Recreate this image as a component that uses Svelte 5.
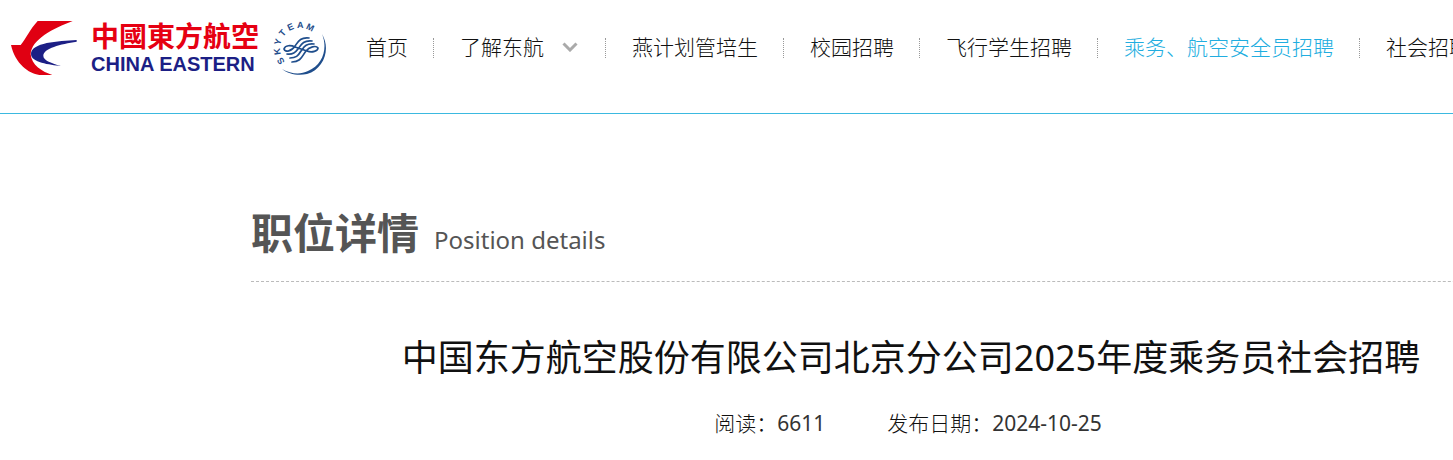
<script>
  const navItems = [
    { label: '首页', href: '#home' },
    { label: '了解东航', href: '#about', hasMenu: true },
    { label: '燕计划管培生', href: '#trainee' },
    { label: '校园招聘', href: '#campus' },
    { label: '飞行学生招聘', href: '#pilot' },
    { label: '乘务、航空安全员招聘', href: '#cabin' },
    { label: '社会招聘', href: '#social' }
  ];
  const current = '#cabin';

  // Letters sit on the left half of the ring
  const ringLetters = 'SKYTEAM'.split('').map((letter, i) => ({
    letter,
    angle: -124 + i * 25
  }));
</script>

<div class="page">
  <header class="header">
    <a class="logo" href="#home" aria-label="中國東方航空 CHINA EASTERN">
      <svg class="bird" viewBox="33 33 198 162" aria-hidden="true">
        <path fill="#e00012" d="M113 33H218C160 55 94 88 92 133C94 165 127 186 157 195H118C86 190 46 162 33 105H62C78 86 90 58 113 33Z" />
        <path fill="#1c1f85" d="M230 90C174 93 93 98 93 132C93 158 149 164 183 168C151 158 130 151 130 137C130 115 182 102 230 95Z" />
      </svg>
      <span class="wordmark">
        <span class="name-cn">中國東方航空</span>
        <span class="name-en">CHINA EASTERN</span>
      </span>
      <svg class="skyteam" viewBox="0 0 54 54" aria-hidden="true">
        {#each ringLetters as { letter, angle }}
          <text x="27" y="7" text-anchor="middle" transform="rotate({angle} 27 27)">{letter}</text>
        {/each}
        <path fill="#1f4e8c" d="M49 13C58 28 51 48 34 53C25 55 15 53 9 48C18 53 27 54 35 50C50 44 55 27 49 13Z" />
        <g fill="none" stroke="#1f4e8c" stroke-width="1.7" stroke-linecap="round">
          <path d="M36 17C27 16 25 21 22 25C19 30 12 32 11 28C12 24 18 24 22 26L34 30C39 32 45 30 45 27C43 24 36 26 33 30C29 35 28 41 19 41" />
          <path d="M39 20C30 19 28 24 25 28C22 32 19 34 14 33" />
          <path d="M41 23C33 22 31 26 28 30C25 35 23 37 17 37" />
        </g>
      </svg>
    </a>
    <nav>
      <ul class="nav">
        {#each navItems as item}
          <li>
            <a href={item.href} class:active={item.href === current}>{item.label}</a>
            {#if item.hasMenu}
              <svg class="chevron" viewBox="0 0 16 10" aria-hidden="true">
                <path d="M1.5 1.5L8 8L14.5 1.5" />
              </svg>
            {/if}
          </li>
        {/each}
      </ul>
    </nav>
  </header>

  <main class="content">
    <div class="section-head">
      <h2>职位详情</h2>
      <span>Position details</span>
    </div>
    <article>
      <h1>中国东方航空股份有限公司北京分公司2025年度乘务员社会招聘</h1>
      <p class="meta">
        <span>阅读：<span class="value">6611</span></span>
        <span>发布日期：<time class="value">2024-10-25</time></span>
      </p>
    </article>
  </main>
</div>

<style>
  :global(body) {
    margin: 0;
    background: #fff;
  }

  .page {
    overflow: hidden;
    color: #333;
    font-family: 'Noto Sans', 'Noto Sans CJK SC', sans-serif;
  }

  a {
    color: inherit;
    text-decoration: none;
  }

  .header {
    display: flex;
    align-items: center;
    padding: 21px 0 38px 11px;
    border-bottom: 1px solid #3bb9e0;
  }

  .logo {
    display: flex;
    flex-shrink: 0;
    align-items: center;
    height: 54px;
  }

  .bird {
    width: 66px;
    height: 54px;
    margin-right: 14px;
  }

  .wordmark {
    display: flex;
    flex-direction: column;
    gap: 5px;
    width: 168px;
    font-weight: 700;
    white-space: nowrap;
  }

  .name-cn {
    color: #e60012;
    font-family: 'Noto Sans CJK TC', sans-serif;
    font-size: 28px;
    line-height: 28px;
  }

  .name-en {
    color: #1c1f85;
    font-family: 'Liberation Sans', sans-serif;
    font-size: 20px;
    line-height: 21px;
  }

  .skyteam {
    width: 54px;
    height: 54px;
    margin-left: 14px;
  }

  .skyteam text {
    fill: #1f4e8c;
    font-family: 'Liberation Sans', sans-serif;
    font-size: 9px;
    font-weight: 700;
  }

  .nav {
    display: flex;
    margin: 0;
    padding: 0 0 0 13px;
    list-style: none;
  }

  .nav li {
    display: flex;
    flex-shrink: 0;
    align-items: center;
    height: 18px;
    padding: 0 25px 2px 26px;
    border-right: 1px dotted #999;
    color: #111;
    font-size: 21px;
    font-weight: 300;
    line-height: 20px;
    white-space: nowrap;
  }

  .nav li:last-child {
    border-right: 0;
  }

  .nav .active {
    color: #21ade0;
  }

  .chevron {
    width: 16px;
    height: 10px;
    margin: 0 2px 0 18px;
    fill: none;
    stroke: #aaa;
    stroke-width: 3;
  }

  .content {
    min-width: 1320px;
    margin: 0 251px;
  }

  .section-head {
    display: flex;
    align-items: baseline;
    gap: 15px;
    padding: 87px 0 17px;
    border-bottom: 1px dashed #bbb;
    color: #555;
  }

  h2 {
    margin: 0;
    font-size: 42px;
    font-weight: 700;
    line-height: 63px;
  }

  .section-head span {
    font-size: 24px;
  }

  h1 {
    margin: 48px 0 0;
    color: #111;
    font-size: 36px;
    font-weight: 400;
    line-height: 56px;
    text-align: center;
  }

  .meta {
    display: flex;
    justify-content: center;
    gap: 62px;
    margin: 21px 0 0;
    padding: 0 6px 21px 0;
    color: #111;
    font-size: 21px;
    font-weight: 300;
    line-height: 32px;
  }

  .value {
    color: #333;
    font-weight: 400;
  }
</style>
